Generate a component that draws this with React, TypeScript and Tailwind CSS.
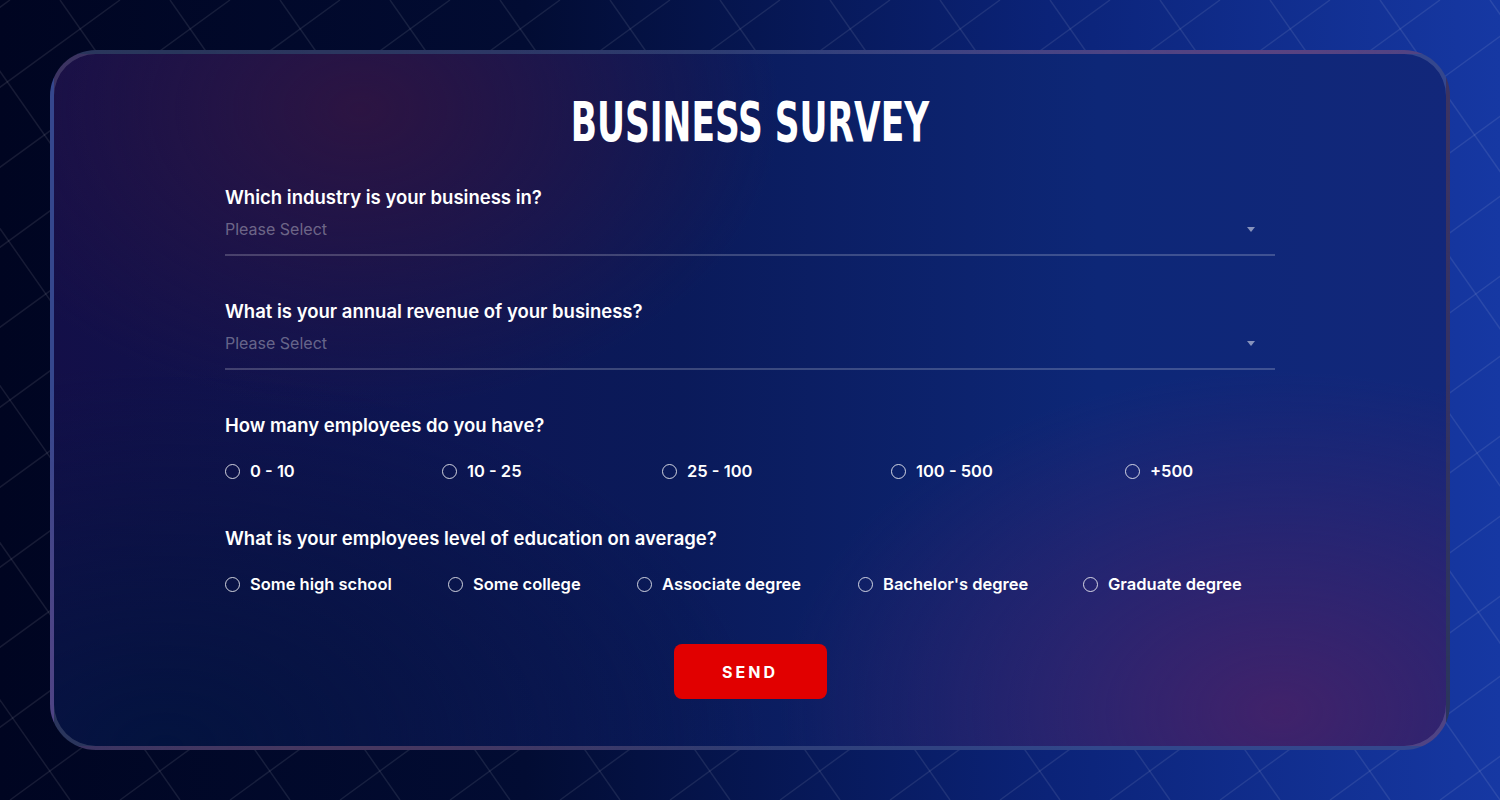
import { useState } from 'react';

const employeeOptions = [
  { label: '0 - 10', width: 'w-[217px]' },
  { label: '10 - 25', width: 'w-[220px]' },
  { label: '25 - 100', width: 'w-[229px]' },
  { label: '100 - 500', width: 'w-[234px]' },
  { label: '+500', width: 'w-auto' },
];

const educationOptions = [
  { label: 'Some high school', width: 'w-[223px]' },
  { label: 'Some college', width: 'w-[189px]' },
  { label: 'Associate degree', width: 'w-[221px]' },
  { label: "Bachelor's degree", width: 'w-[225px]' },
  { label: 'Graduate degree', width: 'w-auto' },
];

function GridLines() {
  return (
    <svg className="absolute inset-0 h-full w-full" viewBox="0 0 1500 800" preserveAspectRatio="none">
      <g stroke="#ffffff" strokeOpacity="0.09" strokeWidth="1.5" fill="none">
        {Array.from({ length: 26 }).map((_, i) => {
          const x = -600 + i * 110;
          return <line key={'a' + i} x1={x} y1={0} x2={x + 560} y2={800} />;
        })}
        {Array.from({ length: 26 }).map((_, i) => {
          const x = -100 + i * 110;
          return <line key={'b' + i} x1={x} y1={0} x2={x - 1100} y2={800} />;
        })}
      </g>
    </svg>
  );
}

function SelectField({ label }: { label: string }) {
  return (
    <div className="flex flex-col">
      <label className="text-[18.5px] leading-[28px] font-semibold text-white">{label}</label>
      <div className="mt-[6px] flex items-center justify-between border-b-2 border-[#ffffff33] pb-[13px]">
        <span className="text-[16px] leading-[24px] text-[#ffffff5c]">Please Select</span>
        <svg width="8" height="5" viewBox="0 0 8 5" className="mr-[20px]">
          <path d="M0 0h8L4 5z" fill="#ffffff80" />
        </svg>
      </div>
    </div>
  );
}

function RadioGroup({
  label,
  name,
  options,
}: {
  label: string;
  name: string;
  options: { label: string; width: string }[];
}) {
  const [value, setValue] = useState('');
  return (
    <div className="flex flex-col">
      <p className="text-[18.5px] leading-[28px] font-semibold text-white">{label}</p>
      <div className="mt-[20px] flex">
        {options.map((o) => (
          <label key={o.label} className={`${o.width} flex cursor-pointer items-center gap-[10px]`}>
            <span
              className={`flex h-[15px] w-[15px] items-center justify-center rounded-full border-[1.5px] border-[#ffffffcc] ${
                value === o.label ? 'bg-white/10' : ''
              }`}
              onClick={() => setValue(o.label)}
            >
              {value === o.label && <span className="h-[7px] w-[7px] rounded-full bg-white" />}
            </span>
            <input type="radio" name={name} className="hidden" onChange={() => setValue(o.label)} />
            <span className="text-[16.5px] leading-[24px] font-semibold text-white">{o.label}</span>
          </label>
        ))}
      </div>
    </div>
  );
}

export default function App() {
  return (
    <div className="relative h-[800px] w-[1500px] overflow-hidden bg-[linear-gradient(90deg,#000521_0%,#020c33_35%,#0b2378_70%,#1638a3_100%)] font-['Inter',sans-serif]">
      <GridLines />
      <div className="relative h-full p-[50px]">
        <div className="flex h-full flex-col items-center rounded-[46px] border-4 border-[#ffffff26] bg-[radial-gradient(ellipse_420px_300px_at_22%_8%,#2c1442_0%,transparent_100%),radial-gradient(ellipse_500px_340px_at_88%_95%,#40226a_0%,transparent_100%),radial-gradient(ellipse_600px_380px_at_8%_100%,#03133f_0%,transparent_100%),linear-gradient(90deg,#130f48_0%,#0a1a5a_45%,#0d2777_75%,#12277a_100%)]">
          <h1 className="mt-[37px] h-[62px] scale-x-[0.87] scale-y-[1.25] font-['Liberation_Sans_Narrow','DejaVu_Sans_Condensed',sans-serif] text-[44px] leading-[62px] font-bold text-white">
            BUSINESS SURVEY
          </h1>
          <div className="mt-[30px] flex w-[1050px] flex-col gap-[41px]">
            <SelectField label="Which industry is your business in?" />
            <SelectField label="What is your annual revenue of your business?" />
            <RadioGroup label="How many employees do you have?" name="employees" options={employeeOptions} />
            <RadioGroup
              label="What is your employees level of education on average?"
              name="education"
              options={educationOptions}
            />
          </div>
          <button className="mt-[48px] h-[55px] w-[153px] rounded-[8px] bg-[#e10000] text-[16px] font-bold tracking-[3px] text-white">
            SEND
          </button>
        </div>
      </div>
    </div>
  );
}
